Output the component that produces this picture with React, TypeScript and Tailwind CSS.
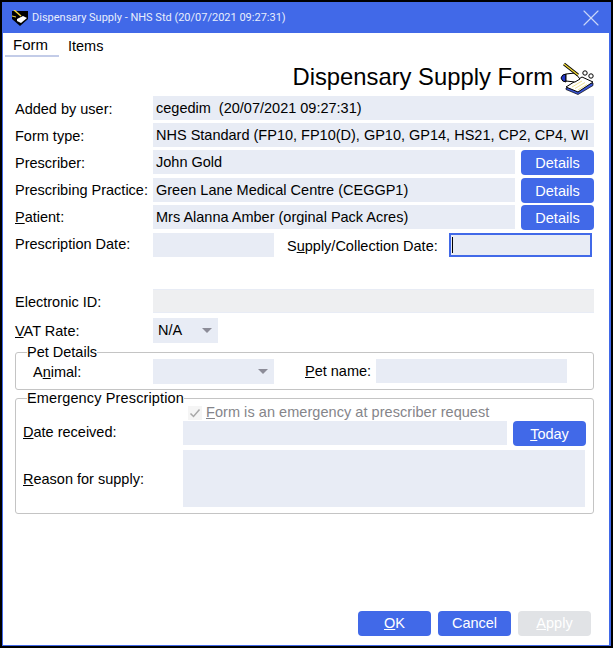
import type React from "react"
import { X } from "lucide-react"

function Field({ className = "", children }: { className?: string; children?: React.ReactNode }) {
  return <div className={`h-6 self-start bg-[#e8ecf5] flex items-center px-[3px] text-[14.5px] text-black whitespace-nowrap overflow-hidden ${className}`}>{children}</div>
}

function Btn({ children, className = "" }: { children: React.ReactNode; className?: string }) {
  return <button className={`w-[73px] h-[25px] rounded-[4px] bg-[#4169e8] text-white text-[14.5px] flex items-center justify-center ${className}`}>{children}</button>
}

function Row({ label, children, className = "", labelClass = "pt-[2px]" }: { label: React.ReactNode; children: React.ReactNode; className?: string; labelClass?: string }) {
  return (
    <div className={`flex items-center ${className}`}>
      <div className={`w-[138px] shrink-0 whitespace-nowrap ${labelClass}`}>{label}</div>
      {children}
    </div>
  )
}

function Caret() {
  return <span className="w-0 h-0 border-x-[5px] border-x-transparent border-t-[5px] border-t-[#8c8c98]" />
}

function SmallLogo() {
  return (
    <svg width="16" height="16" viewBox="0 0 16 16" className="shrink-0">
      <path d="M0 1h16v8l-8 7-8-7z" fill="#000" />
      <path d="M5 9l6-3 4 2-6 5-4-2z" fill="#fff" />
      <path d="M2 0l7 6" stroke="#f4d63a" strokeWidth="1.5" />
      <path d="M0 6l4 1" stroke="#f4d63a" strokeWidth="1" />
    </svg>
  )
}

function NotepadIcon() {
  return (
    <svg width="34" height="34" viewBox="0 0 34 34" className="shrink-0">
      <path d="M6 27l0 1.5 12 5 15-9 0-2.5z" fill="#3a55d8" stroke="#000" strokeWidth="0.7" />
      <path d="M6 26l16-10 11 5-15 10z" fill="#fff" stroke="#000" strokeWidth="1" />
      <path d="M12 26l10-6M15 27.5l10-6M18 29l9-5.5" stroke="#e8d878" strokeWidth="0.8" />
      <path d="M1 17q1-4 5-4l0 8q-4 0-5-4z" fill="#2338c8" stroke="#000" strokeWidth="1" />
      <path d="M6 13l9-1 5 6-5 3-9-1z" fill="#fff" stroke="#000" strokeWidth="1" />
      <path d="M4 3l14 11" stroke="#000" strokeWidth="3" />
      <path d="M4 3l14 11" stroke="#f0d838" strokeWidth="1.4" />
      <circle cx="25" cy="12" r="2.2" fill="#fff" stroke="#000" />
      <circle cx="31" cy="15" r="2.2" fill="#fff" stroke="#000" />
    </svg>
  )
}

export default function App() {
  return (
    <div className="w-[613px] h-[648px] border-2 border-black bg-white text-black text-[14.5px] leading-none font-['Liberation_Sans',Arial,sans-serif] overflow-hidden">
      <div className="h-full border-x border-b border-[#4169e8] border-r-[2px] flex flex-col">
        <div className="h-[31px] bg-[#4169e8] flex items-center text-white shrink-0 pl-[9px] pr-[4px]">
          <SmallLogo />
          <span className="ml-[4px] text-[11px] font-['Roboto',sans-serif] text-[#e8eefc]">Dispensary Supply - NHS Std (20/07/2021 09:27:31)</span>
          <X className="ml-auto text-[#c9d6f8]" size={28} strokeWidth={1} />
        </div>

        <div className="flex pl-[2px] h-6 shrink-0">
          <div className="w-[54px] border-b-2 border-[#c3cce8] pl-[8px] pt-[4px] text-[15px]">Form</div>
          <div className="pl-[9px] pt-[6px]">Items</div>
        </div>

        <div className="flex items-center justify-end h-[36px] pr-[15px] mt-[3px] gap-[7px] shrink-0">
          <h1 className="text-[23.8px] -mt-[2px]">Dispensary Supply Form</h1>
          <NotepadIcon />
        </div>

        <div className="pl-[12px] pr-[15px] flex flex-col shrink-0">
          <Row label="Added by user:"><Field className="flex-1">cegedim&nbsp; (20/07/2021 09:27:31)</Field></Row>
          <Row label="Form type:" className="mt-[3px]"><Field className="flex-1">NHS Standard (FP10, FP10(D), GP10, GP14, HS21, CP2, CP4, WI</Field></Row>
          <Row label="Prescriber:" className="mt-[3px]">
            <Field className="w-[362px]">John Gold</Field>
            <Btn className="ml-[6px] pt-px">Details</Btn>
          </Row>
          <Row label="Prescribing Practice:" className="mt-[3px]" labelClass="">
            <Field className="w-[362px]">Green Lane Medical Centre (CEGGP1)</Field>
            <Btn className="ml-[6px] pt-px">Details</Btn>
          </Row>
          <Row label={<><u>P</u>atient:</>} className="mt-[2px]" labelClass="">
            <Field className="w-[362px]">Mrs Alanna Amber (orginal Pack Acres)</Field>
            <Btn className="ml-[6px] pt-px">Details</Btn>
          </Row>
          <Row label="Prescription Date:" className="mt-[3px]" labelClass="pb-[2px]">
            <Field className="w-[121px]" />
            <span className="ml-[13px] w-[162px] pt-[2px]">S<u>u</u>pply/Collection Date:</span>
            <div className="w-[143px] h-6 bg-[#e8ecf5] border-2 border-[#4169e8] flex items-center pl-[1px]">
              <span className="w-px h-[16px] bg-black" />
            </div>
          </Row>
          <Row label="Electronic ID:" className="mt-[32px]"><Field className="flex-1 bg-[#eeeff1] border-t border-b border-[#e8ecf5]" /></Row>
          <Row label={<><u>V</u>AT Rate:</>} className="mt-[5px]">
            <div className="w-[65px] h-[25px] bg-[#e8ecf5] flex items-center justify-between pl-[5px] pr-[6px] text-[14.5px]">
              N/A
              <Caret />
            </div>
          </Row>

          <fieldset className="mt-[2px] border border-[#c4c4c4] rounded-[3px] h-[45px] pl-[11px]">
            <legend className="text-[14.5px] leading-[14px]">Pet Details</legend>
            <div className="flex items-center pl-[6px]">
              <div className="w-[120px] shrink-0 pt-[1px]">A<u>n</u>imal:</div>
              <div className="w-[121px] h-[25px] bg-[#e8ecf5] flex items-center justify-end pr-[6px]"><Caret /></div>
              <span className="ml-[31px] w-[71px]"><u>P</u>et name:</span>
              <Field className="w-[191px]" />
            </div>
          </fieldset>

          <fieldset className="mt-[1px] border border-[#c4c4c4] rounded-[3px] h-[123px] pl-[7px] pr-[7px]">
            <legend className="ml-[4px] text-[14.5px] leading-[14px] tracking-[0.14px]">Emergency Prescription</legend>
            <div className="flex items-center h-[15px] pl-[165px] text-[#85858a]">
              <span className="w-[14px] h-[14px] bg-[#f5f5f5] flex items-center justify-center">
                <svg width="12" height="12" viewBox="0 0 12 12"><path d="M1.5 6.5l3 3 6-7" fill="none" stroke="#a8a8a8" strokeWidth="1.5" /></svg>
              </span>
              <span className="ml-[4px] tracking-[0.05px]"><u>F</u>orm is an emergency at prescriber request</span>
            </div>
            <div className="flex items-center mt-[1px]">
              <div className="w-[160px] shrink-0 pb-[2px]"><u>D</u>ate received:</div>
              <Field className="w-[324px]" />
              <Btn className="ml-[6px] pt-px"><span><u>T</u>oday</span></Btn>
            </div>
            <div className="flex items-center mt-[4px]">
              <div className="w-[160px] shrink-0 pt-[2px]"><u>R</u>eason for supply:</div>
              <div className="w-[402px] h-[57px] bg-[#e8ecf5]" />
            </div>
          </fieldset>
        </div>

        <div className="mt-auto flex justify-end gap-[7px] pr-[18px] pb-[9px]">
          <Btn><span><u>O</u>K</span></Btn>
          <Btn>Cancel</Btn>
          <Btn className="bg-[#e1e3e6] text-[#7d7d82]"><span><u>A</u>pply</span></Btn>
        </div>
      </div>
    </div>
  )
}
